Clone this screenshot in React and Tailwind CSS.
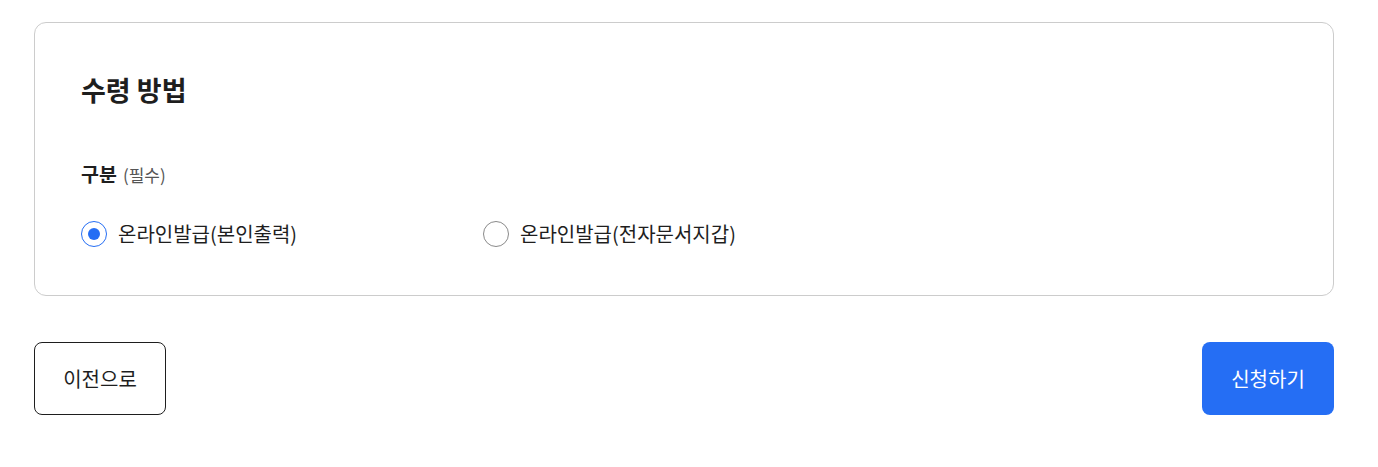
export default function App() {
  const font = { fontFamily: '"Noto Sans CJK KR", "Noto Sans", sans-serif' };
  return (
    <div className="bg-white w-[1378px] h-[467px] pl-[34px] pr-[44px] pt-[22px]" style={font}>
      <div className="border border-[#cccccc] rounded-[12px] h-[274px] pl-[46px] pt-[47px]">
        <h2 className="text-[27px] leading-[40px] font-bold text-[#1e1e1e]">수령 방법</h2>
        <div className="mt-[50px] flex items-baseline gap-[6px] leading-[28px]">
          <span className="text-[19.5px] font-bold text-[#1e1e1e]">구분</span>
          <span className="text-[17px] text-[#555555]">(필수)</span>
        </div>
        <div className="mt-[31px] flex items-center">
          <label className="flex items-center gap-[11px] w-[402px]">
            <span className="w-[26px] h-[26px] rounded-full border border-[#256ef4] flex items-center justify-center">
              <span className="w-[12px] h-[12px] rounded-full bg-[#256ef4]"></span>
            </span>
            <span className="text-[20px] text-[#1e1e1e] leading-[28px]">온라인발급(본인출력)</span>
          </label>
          <label className="flex items-center gap-[11px]">
            <span className="w-[26px] h-[26px] rounded-full border border-[#8a8a8a]"></span>
            <span className="text-[20px] text-[#1e1e1e] leading-[28px]">온라인발급(전자문서지갑)</span>
          </label>
        </div>
      </div>
      <div className="mt-[46px] flex justify-between">
        <button className="w-[132px] h-[73px] border border-[#1e1e1e] rounded-[8px] text-[20px] text-[#1e1e1e] bg-white">이전으로</button>
        <button className="w-[132px] h-[73px] rounded-[8px] text-[20px] text-white bg-[#256ef4]">신청하기</button>
      </div>
    </div>
  );
}
